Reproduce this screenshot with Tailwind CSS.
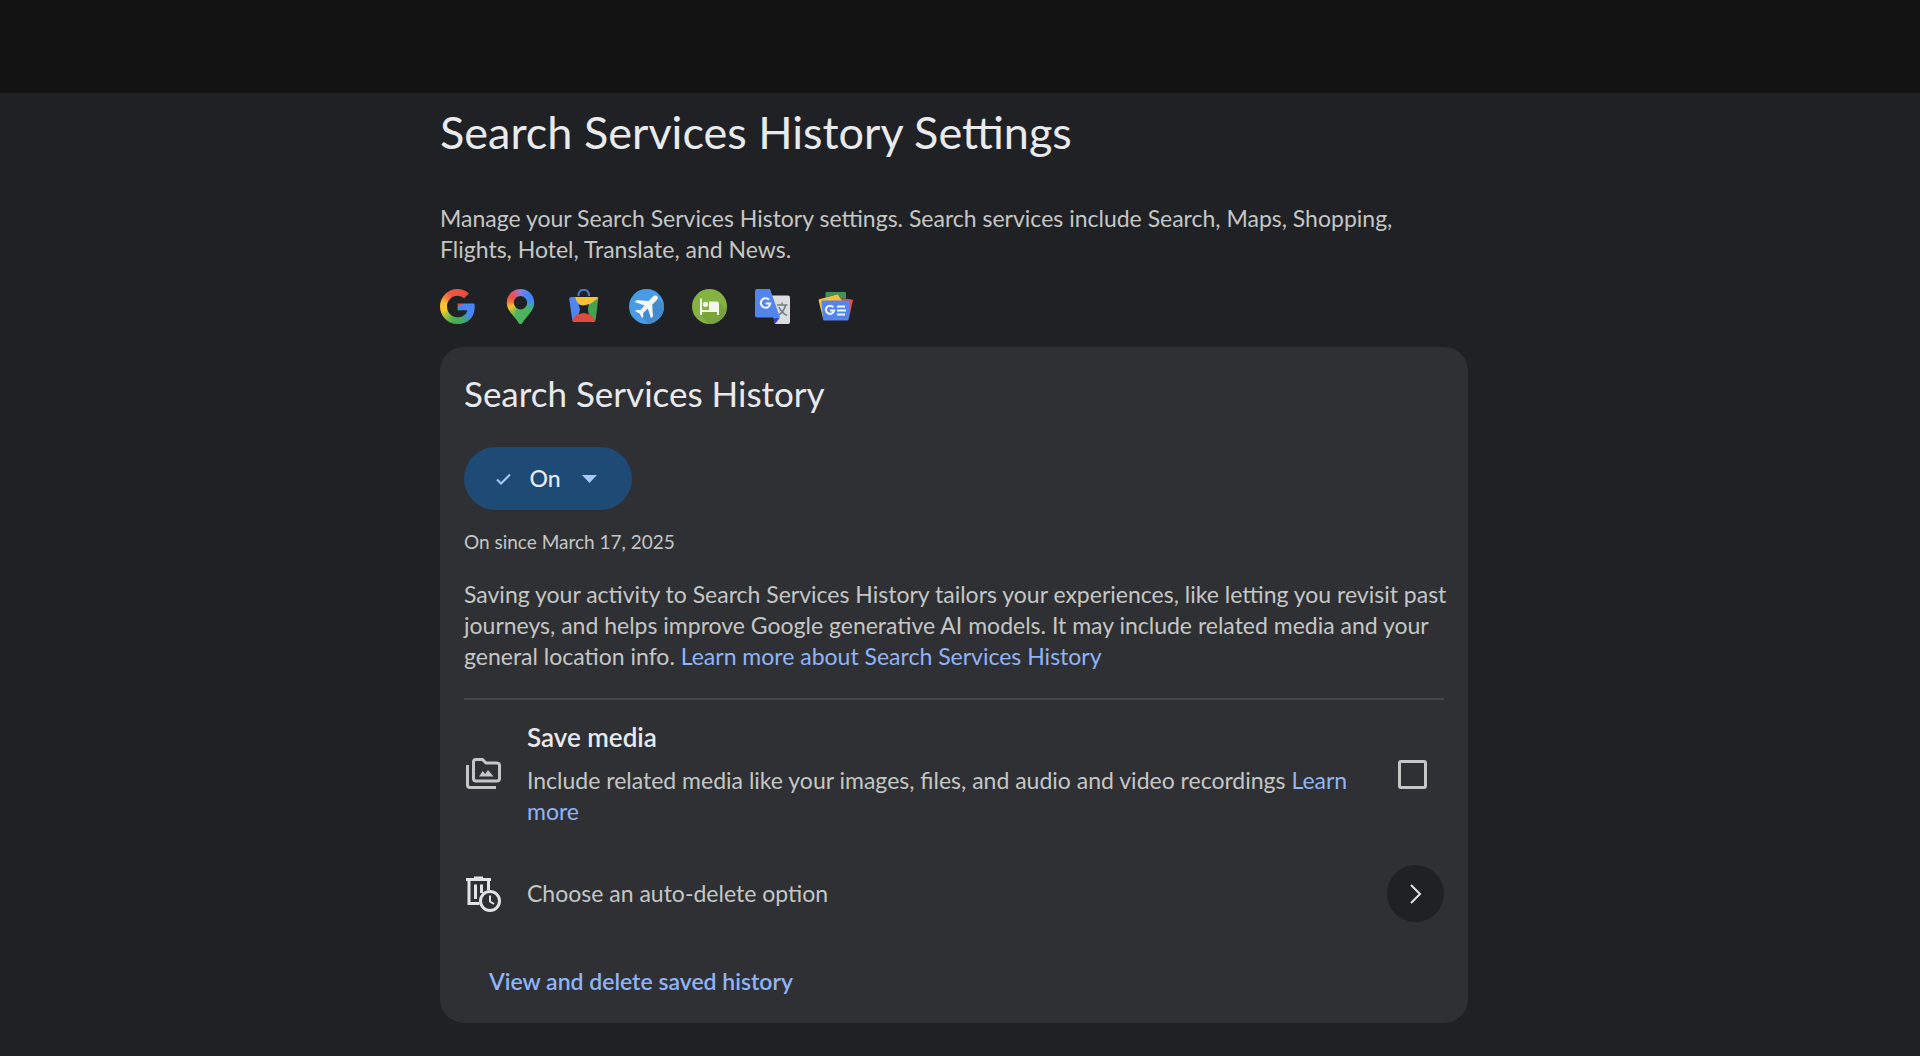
<!DOCTYPE html>
<html lang="en">
<head>
  <meta charset="UTF-8" />
  <meta name="viewport" content="width=device-width, initial-scale=1.0"/>
  <title>Search Services History Settings</title>
  <script src="https://cdn.jsdelivr.net/npm/@tailwindcss/browser@4"></script>
</head>
<body class="min-h-screen bg-[#202124] font-['Lato',sans-serif] text-[23px] leading-[31px] text-[#c4c7c5]">

  <!-- Top bar -->
  <header class="h-[93px] bg-[#131313]"></header>

  <div class="pr-3">
    <main class="mx-auto max-w-[1028px] pt-[11px] pb-8">
      <h1 class="text-[45px] leading-14 text-[#e8eaed]">Search Services History Settings</h1>
      <p class="mt-[43px]">Manage your Search Services History settings. Search services include Search, Maps, Shopping,<br />Flights, Hotel, Translate, and News.</p>

      <!-- Service icons -->
      <ul class="mt-6 flex gap-7">
        <li>
          <svg class="size-[35px]" viewBox="0 0 35 35" role="img" aria-label="Search">
            <foreignObject width="35" height="35" clip-path="url(#gShape)">
              <div class="size-[35px] bg-[conic-gradient(from_0deg,#ea5545_0deg,#ea4335_50deg,#4b86f4_75deg,#4285f4_125deg,#41a76b_155deg,#4bae4f_200deg,#9bc33a_230deg,#f9c92c_255deg,#f9c22c_285deg,#f07a3c_310deg,#ea5545_335deg)]"></div>
            </foreignObject>
            <clipPath id="gShape">
              <path d="M17.6 0C22.2 0 26 1.600 29 4.400L24.100 9.300C22.300 7.600 20.100 6.700 17.600 6.700C11.600 6.700 7 11.500 7 17.500C7 23.500 11.600 28.300 17.600 28.300C22.700 28.300 26.300 25.600 27.300 21.300H17.600V14.600H34.300C34.600 15.700 34.700 16.900 34.700 18C34.700 28.500 27.700 35 17.600 35C7.900 35 0 27.200 0 17.500S7.900 0 17.600 0Z" />
            </clipPath>
          </svg>
        </li>
        <li>
          <svg class="size-[35px]" viewBox="0 0 35 35" role="img" aria-label="Maps">
            <foreignObject width="35" height="35" clip-path="url(#pinShape)">
              <div class="size-[35px] bg-[conic-gradient(from_0deg_at_50%_40%,#8d7be0_0deg,#4b86f4_30deg,#4285f4_75deg,#45a5a5_105deg,#4bb45c_135deg,#4bb45c_200deg,#9bc33a_225deg,#f9c22c_250deg,#f0783c_275deg,#ea5045_300deg,#d85a78_330deg,#8d7be0_360deg)]"></div>
            </foreignObject>
            <clipPath id="pinShape">
              <path clip-rule="evenodd" d="M17.500 0C25.300 0 31.200 6 31.200 13.700C31.200 18.500 28.800 22 25.500 26C22.500 29.600 20.500 32 19.200 34.200C18.400 35.300 16.600 35.300 15.800 34.200C14.500 32 12.500 29.600 9.500 26C6.200 22 3.800 18.500 3.800 13.700C3.800 6 9.700 0 17.500 0ZM17.500 7A6.700 6.700 0 1 0 17.500 20.400A6.700 6.700 0 1 0 17.500 7Z" />
            </clipPath>
          </svg>
        </li>
        <li>
          <svg class="size-[35px]" viewBox="0 0 35 35" fill="none" role="img" aria-label="Shopping">
            <clipPath id="bag"><path d="M5.500 8H30.500Q32.500 8 32.200 10L29.700 31Q29.400 33 27.400 33H8.600Q6.600 33 6.300 31L3.200 10Q3 8 5.500 8Z" /></clipPath>
            <path d="M12.500 7V6A5.200 5.200 0 0 1 23 6V7" stroke="#4779cf" stroke-width="2" />
            <g clip-path="url(#bag)">
              <path d="M2 7H18V34H2Z" fill="#5087ee" />
              <path d="M18 7H34V34H18Z" fill="#43a353" />
              <path d="M9 7H33V9C27 12 24.500 16.500 18 16.500C12 16.500 10 12 9 7Z" fill="#f7c234" />
              <path d="M5 34C7 28 12 23.500 18 23.500C24 23.500 28 28 30 34Z" fill="#dc4c3f" />
              <path d="M12.500 15.500Q17.500 17.500 23 15Q21 20.500 23 25.500Q18 22.500 12.500 25.500Q15 20.500 12.500 15.500Z" fill="#202124" />
            </g>
          </svg>
        </li>
        <li>
          <svg class="size-[35px]" viewBox="0 0 35 35" role="img" aria-label="Flights">
            <clipPath id="disc"><circle cx="17.500" cy="17.500" r="17.500" /></clipPath>
            <circle cx="17.500" cy="17.500" r="17.500" fill="#4a9be6" />
            <path clip-path="url(#disc)" d="M27 8L36 17V36H20L13 27Z" fill="#438bcf" />
            <path d="M28.200 7.300C27 6.100 25 6.600 23.800 7.800L19.600 12L7.800 11L5.800 13L15.600 16.500L11.200 21.300L7.600 20.800L6.200 22.200L10.600 24.600L13 29L14.400 27.600L14 24.200L18.800 19.600L22 29.200L24 27.200L23.200 15.700L27.500 11.500C28.700 10.300 29.400 8.500 28.200 7.300Z" fill="#f5f5f5" />
          </svg>
        </li>
        <li>
          <svg class="size-[35px]" viewBox="0 0 35 35" role="img" aria-label="Hotel">
            <circle cx="17.500" cy="17.500" r="17.500" fill="#85b341" />
            <path clip-path="url(#disc)" d="M28 14L36 22V36H17L9 26L17 21Z" fill="#79a43b" />
            <path d="M8 9.500H10V21H17V12.500H24.500Q27 12.500 27 15V26H25V23H10V26H8Z" fill="#f4f6ee" />
            <circle cx="13.500" cy="15.300" r="2.600" fill="#f4f6ee" />
          </svg>
        </li>
        <li>
          <svg class="size-[35px]" viewBox="0 0 35 35" fill="none" role="img" aria-label="Translate">
            <path d="M14 6.500H33Q35 6.500 35 8.500V33Q35 35 33 35H20Z" fill="#dcdde0" />
            <path d="M18 28.500H25L20 35Z" fill="#3548b8" />
            <path d="M22 16H32.500M27 13.500V16M30.500 16C29.500 21 26.500 24.500 22.500 27M24 18C25.500 22 28 24.500 32 26.500" stroke="#6d7f83" stroke-width="1.500" />
            <path d="M2 0H15L25 28.500H2Q0 28.500 0 26.500V2Q0 0 2 0Z" fill="#5286ec" />
            <path d="M14 10.800A4.700 4.700 0 1 0 15.200 14.600H10.700" stroke="#f2f5fc" stroke-width="2" />
          </svg>
        </li>
        <li>
          <svg class="size-[35px]" viewBox="0 0 35 35" fill="none" role="img" aria-label="News">
            <path d="M18 8.500L34 10.500Q35 10.700 34.900 11.500L31 29L19 18Z" fill="#dd5144" />
            <path d="M.5 11.300Q.3 10.500 1.200 10.200L20 5L24 12L5 29Z" fill="#f2bd42" />
            <path d="M8.500 3H27Q28 3 28 4V9.700L22.500 9L20 5L7.500 8.500V4Q7.500 3 8.500 3Z" fill="#3f9557" />
            <path d="M4.500 11.500H30.500Q32 11.500 32 13L30.700 30Q30.600 31.500 29 31.500H6.500Q5 31.500 5 30L3.500 13Q3.500 11.500 4.500 11.500Z" fill="#5286ec" />
            <path d="M15.300 18.200A4.100 4.100 0 1 0 16.100 21.600H12.200M19 17.500H27M19 21.500H28M19 25.500H27" stroke="#f2f5fc" stroke-width="2" />
          </svg>
        </li>
      </ul>

      <!-- History card -->
      <section class="mt-[23px] rounded-3xl bg-[#2f3033] px-6 pt-6 pb-[26px]">
        <h2 class="text-[35px] leading-11 text-[#e8eaed]">Search Services History</h2>
        <button type="button" class="mt-8 flex h-[63px] w-[168px] items-center rounded-full bg-[#1e4a76] pl-8 font-medium text-[#e8eaed]">
          <svg class="size-4" viewBox="0 0 16 16" fill="none" stroke="#a8c7fa" stroke-width="2"><path d="M1 8.500L5 12.500L14 3.500" /></svg>
          <span class="w-[66px] text-center">On</span>
          <svg class="ml-1 h-2 w-[15px]" viewBox="0 0 15 8" fill="#a8c7fa"><path d="M0 0H15L7.500 8Z" /></svg>
        </button>
        <p class="mt-4 text-[19px]">On since March 17, 2025</p>
        <p class="mt-[22px] whitespace-nowrap">Saving your activity to Search Services History tailors your experiences, like letting you revisit past<br />journeys, and helps improve Google generative AI models. It may include related media and your<br />general location info. <a href="#" class="text-[#8fb4f8]">Learn more about Search Services History</a></p>
        <hr class="mt-[26px] border-t-2 border-[#444649]" />

        <!-- Save media -->
        <div class="mt-[22px] flex items-center">
          <svg class="mr-[26px] size-[37px] shrink-0" viewBox="0 0 37 37" fill="none" stroke="#c4c7c5" stroke-width="3">
            <path d="M3.500 9V29Q3.500 31.500 6 31.500H32" />
            <path d="M9.500 6Q9.500 3.500 12 3.500H18.500L22 7H33Q35.500 7 35.500 9.500V22.500Q35.500 25 33 25H12Q9.500 25 9.500 22.500Z" />
            <path d="M15 20.500L18.700 15L21.200 18L24 14L29.500 20.500Z" fill="#c4c7c5" stroke="none" />
          </svg>
          <div class="flex-1">
            <label for="saveMedia" class="block text-[26px] font-semibold text-[#e8eaed]">Save media</label>
            <p class="mt-3">Include related media like your images, files, and audio and video recordings <a href="#" class="text-[#8fb4f8]">Learn<br />more</a></p>
          </div>
          <input type="checkbox" id="saveMedia" class="mr-[17px] size-[29px] appearance-none rounded-[3px] border-3 border-[#c4c7c5] checked:bg-[#8fb4f8]" />
        </div>

        <!-- Auto-delete -->
        <div class="mt-[38px] flex items-center">
          <svg class="mr-[26px] size-[37px] shrink-0" viewBox="0 0 37 37" fill="none" stroke="#e3e3e3" stroke-width="3">
            <path d="M2 4.500H27M10 3H19" />
            <path d="M5 5V28.500H15.500M24.500 5V15M11.500 9.500V24M17.500 9.500V18" />
            <circle cx="26" cy="26" r="9.500" />
            <path d="M26 20.500V26.500L30 29" stroke-width="2" />
          </svg>
          <span class="flex-1">Choose an auto-delete option</span>
          <button type="button" aria-label="Choose an auto-delete option" class="flex size-[57px] items-center justify-center rounded-full bg-[#202124]">
            <svg class="size-5" viewBox="0 0 20 20" fill="none" stroke="#e3e3e3" stroke-width="2"><path d="M5 1L14 10L5 19" /></svg>
          </button>
        </div>

        <a href="#" class="mt-11 ml-[25px] inline-block font-semibold text-[#8fb4f8]">View and delete saved history</a>
      </section>
    </main>
  </div>

</body>
</html>
